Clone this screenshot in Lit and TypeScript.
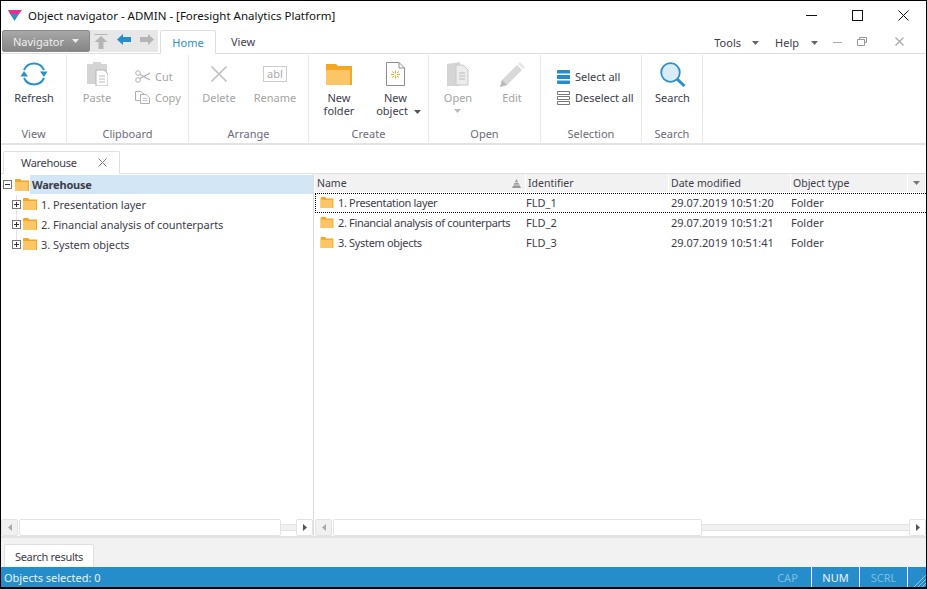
import { LitElement, html, css, svg } from "lit";
import { customElement } from "lit/decorators.js";

const folder = (w = 14, h = 12) => html`<svg class="ic" width=${w} height=${h} viewBox="0 0 14 12"><path d="M0 1Q0 0 1 0H5L6.5 1.5H14V12H0Z" fill="#f5a623"/><path d="M0 3H13V12H0Z" fill="#fcc567"/></svg>`;
const caret = () => html`<svg class="ic" width="7" height="4" viewBox="0 0 7 4"><path d="M0 0H7L3.5 4Z" fill="currentColor"/></svg>`;

const icons = {
  refresh: svg`<path d="M4 9A11 11 0 0 1 24 9" fill="none" stroke="#2a8fcb" stroke-width="2"/><path d="M20 10.5H27.5L24 16Z" fill="#2a8fcb"/><path d="M24 17A11 11 0 0 1 4 17" fill="none" stroke="#2a8fcb" stroke-width="2"/><path d="M.5 15.5H8L4 10Z" fill="#2a8fcb"/>`,
  paste: svg`<path d="M0 2H6V0H14V2H20V22H0Z" fill="#d4d4d4"/><path d="M9 8H17L21 12V24H9Z" fill="#fff" stroke="#b5b5b5"/><path d="M12 14H18M12 17H18M12 20H18" stroke="#bbb"/>`,
  edit: svg`<path d="M2 18L17 3L22 8L7 23L0 25Z" fill="#d8d8d8"/><path d="M18 2L20 0L25 5L23 7Z" fill="#e6e6e6"/><path d="M2 18L7 23L0 25Z" fill="#bbb"/>`,
  open: svg`<path d="M0 2L13 0V24H0Z" fill="#d5d5d5"/><path d="M9 3H16L21 8V23H9Z" fill="#ececec" stroke="#c8c8c8"/><path d="M12 11H18M12 14H18M12 17H18" stroke="#bbb"/>`,
  doc: svg`<path d="M.5.5H13L18.5 6V23.5H.5Z" fill="#fff" stroke="#8e8e8e"/><path d="M13 .5V6H18.5" fill="none" stroke="#8e8e8e"/><path d="M9.5 8.5V11.5M9.5 13.5V16.5M5 12.5H8M11 12.5H14M6 9.5L8 11M13 9.5L11 11M6 15.5L8 14M13 15.5L11 14" stroke="#f5a623"/>`,
  search: svg`<circle cx="10.5" cy="10.5" r="9.3" fill="#d8ebf7" stroke="#2a8fcb" stroke-width="1.8"/><path d="M17 17L24.5 24" stroke="#2a8fcb" stroke-width="3"/>`,
};

@customElement("app-root")
export class AppRoot extends LitElement {
  static styles = css`
    :host { display: block; width: 927px; height: 589px; font-family: "Noto Sans", sans-serif; font-size: 11px; color: #3d3d4a; }
    * { box-sizing: border-box; }
    .win { width: 927px; height: 589px; border: 1px solid #000; border-bottom-width: 2px; display: flex; flex-direction: column; background: #fff; overflow: hidden; }
    .ic { display: block; flex: none; }
    .title { height: 29px; display: flex; align-items: center; padding-left: 7px; flex: none; }
    .title .name { font-size: 11.5px; color: #111; margin-left: 6px; }
    .wbtns { margin-left: auto; display: flex; align-items: center; }
    .wbtn { width: 46px; display: flex; justify-content: center; }
    .menu { height: 24px; display: flex; flex: none; border-bottom: 1px solid #dfdfdf; padding-left: 1px; }
    .nav { width: 88px; height: 22px; background: linear-gradient(#a8a8a8, #858585); border: 1px solid #8a8a8a; border-radius: 2px; color: #eee; display: flex; align-items: center; padding-left: 10px; gap: 8px; }
    .qa { width: 68px; height: 22px; background: #e7e7e7; display: flex; align-items: center; gap: 9px; padding-left: 4px; }
    .tab-home { width: 56px; height: 24px; margin: 0 0 -1px 2px; border: 1px solid #dfdfdf; border-bottom: none; border-radius: 2px 2px 0 0; color: #2a8fcb; background: #fff; display: flex; align-items: center; justify-content: center; padding-bottom: 1px; }
    .tab-view { margin-left: 15px; display: flex; align-items: center; padding-bottom: 1px; }
    .right { margin-left: auto; display: flex; align-items: center; color: #3d3d4a; padding-top: 1px; }
    .right .arr { color: #666; margin-top: 2px; }
    .ribbon { height: 91px; flex: none; display: flex; border-bottom: 2px solid #e3e3e3; padding-top: 1px; }
    .grp { display: flex; flex-direction: column; margin-bottom: 1px; border-right: 1px solid #e8e8e8; flex: none; }
    .grp-body { flex: 1; display: flex; }
    .grp-label { height: 16px; text-align: center; color: #6b6b78; line-height: 15px; }
    .big { display: flex; flex-direction: column; align-items: center; flex: none; padding-top: 3px; text-align: center; line-height: 13px; }
    .big .slot { height: 32px; display: flex; align-items: center; justify-content: center; }
    .big .lbl { margin-top: 1px; }
    .dis { color: #a3a3a3; }
    .smalls { display: flex; flex-direction: column; padding-top: 11px; flex: none; }
    .small { height: 21px; display: flex; align-items: center; gap: 5px; }
    .objrow { display: flex; align-items: center; gap: 6px; }
    .objrow .arr { color: #555; margin-top: 2px; }
    .tabs { height: 29px; flex: none; display: flex; padding: 6px 0 0 2px; border-bottom: 1px solid #dfdfdf; }
    .tab { width: 117px; height: 23px; border: 1px solid #dfdfdf; border-bottom: none; border-radius: 2px 2px 0 0; background: #fff; display: flex; align-items: center; padding: 0 0 1px 17px; margin-bottom: -1px; letter-spacing: -.3px; }
    .tab .x { margin-left: auto; margin-right: 12px; }
    .main { flex: 1; display: flex; min-height: 0; }
    .left { width: 313px; flex: none; border-right: 1px solid #dcdcdc; display: flex; flex-direction: column; }
    .rightp { flex: 1; display: flex; flex-direction: column; min-width: 0; }
    .tree { flex: 1; padding-top: 1px; }
    .subs { background: linear-gradient(#e2e2e2, #e2e2e2) 15px 0 / 1px 50px no-repeat; }
    .trow { height: 20px; display: flex; align-items: center; padding-bottom: 2px; }
    .trow.root { height: 19px; margin-bottom: 1px; padding-bottom: 0; }
    .trow .rootbox { margin: 0 3px 0 2px; }
    .trow .sub { margin-left: 11px; margin-right: 2px; }
    .sel { flex: 1; height: 19px; margin-left: 1px; background: #d3e6f5; font-weight: 700; padding-left: 2px; display: flex; align-items: center; letter-spacing: -.2px; }
    .trow .t { margin-left: 4px; letter-spacing: -.06px; }
    .head { height: 19px; display: flex; flex: none; margin-left: 1px; font-size: 10.5px; }
    .hc { background: #f2f2f2; border-right: 1px solid #fff; display: flex; align-items: center; padding: 0 0 0 2px; flex: none; height: 18px; }
    .row { height: 20px; display: flex; align-items: center; margin-left: 1px; border: 1px solid transparent; padding-bottom: 2px; }
    .row.focus { border: 1px dotted #000; border-right: none; }
    .cell { flex: none; display: flex; align-items: center; white-space: nowrap; }
    .nm { letter-spacing: -.33px; }
    .grow { flex: 1; }
    .sb { height: 17px; flex: none; display: flex; background: #fff; align-items: center; }
    .sb .btn { width: 17px; height: 17px; background: #f1f1f1; border: 1px solid #e3e3e3; border-radius: 2px; display: flex; align-items: center; justify-content: center; flex: none; }
    .sb .btn.r { background: #fff; }
    .sb .thumb { height: 17px; background: #fff; border: 1px solid #e3e3e3; border-radius: 2px; flex: none; }
    .sb .track { height: 7px; flex: 1; background: #f1f1f1; border-top: 1px solid #e3e3e3; border-bottom: 1px solid #e3e3e3; }
    .bottom { height: 31px; flex: none; background: #f2f2f2; border-top: 2px solid #e3e3e3; padding: 6px 0 0 3px; }
    .btab { width: 90px; height: 24px; background: #fff; border: 1px solid #e0e0e0; border-bottom: none; border-radius: 2px 2px 0 0; display: flex; align-items: center; justify-content: center; letter-spacing: -.3px; }
    .status { height: 20px; flex: none; background: #268dcb; color: #eaf4fb; display: flex; align-items: center; padding-left: 3px; }
    .locks { margin-left: auto; display: flex; height: 100%; align-items: stretch; }
    .lock { width: 48px; display: flex; align-items: center; justify-content: center; border-right: 1px solid #eaf4fb; color: #7dbde4; }
    .lock.on { color: #eaf4fb; }
    .grip { width: 18px; display: flex; align-items: flex-end; justify-content: flex-end; }
  `;

  private bigBtn(w: number, icon: unknown, lines: unknown, cls = "") {
    return html`<div class="big ${cls}" style="width:${w}px"><div class="slot">${icon}</div><div class="lbl">${lines}</div></div>`;
  }

  private tri(dir: "l" | "r", color: string) {
    return html`<svg class="ic" width="4" height="7" viewBox="0 0 4 7"><path d=${dir === "l" ? "M4 0V7L0 3.5Z" : "M0 0V7L4 3.5Z"} fill=${color}/></svg>`;
  }

  private sb(leftThumb: number, pad: number) {
    return html`<div class="sb" style="padding-left:${pad}px"><div class="btn">${this.tri("l", "#aaa")}</div><div class="thumb" style="width:${leftThumb}px;margin-left:1px"></div><div class="track"></div><div class="btn r">${this.tri("r", "#555")}</div></div>`;
  }

  render() {
    const rows = [
      ["1. Presentation layer", "FLD_1", "29.07.2019 10:51:20"],
      ["2. Financial analysis of counterparts", "FLD_2", "29.07.2019 10:51:21"],
      ["3. System objects", "FLD_3", "29.07.2019 10:51:41"],
    ];
    const i = (w: number, h: number, body: unknown, vb = `0 0 ${w} ${h}`) => html`<svg class="ic" width=${w} height=${h} viewBox=${vb}>${body}</svg>`;
    const boxIcon = (plus: boolean) => html`<svg class="ic" width="9" height="9" viewBox="0 0 9 9"><rect x=".5" y=".5" width="8" height="8" fill="#fff" stroke="#777"/><path d=${plus ? "M2 4.5H7M4.5 2V7" : "M2 4.5H7"} stroke="#333"/></svg>`;
    const X = (s: number, c: string, w = 1) => html`<svg class="ic" width=${s} height=${s} viewBox="0 0 ${s} ${s}"><path d="M.5 .5L${s - .5} ${s - .5}M${s - .5} .5L.5 ${s - .5}" stroke=${c} stroke-width=${w} fill="none"/></svg>`;
    return html`
      <div class="win">
        <div class="title">
          <svg class="ic" width="14" height="11" viewBox="0 0 14 11" style="margin-top:-1px"><path d="M0 0H14L11 4H2Z" fill="#e8308a"/><path d="M2 4H11L6.5 11Z" fill="#2a8fcb"/></svg>
          <span class="name">Object navigator - ADMIN - [Foresight Analytics Platform]</span>
          <div class="wbtns">
            <div class="wbtn"><svg class="ic" width="11" height="1"><rect width="11" height="1" fill="#111"/></svg></div>
            <div class="wbtn"><svg class="ic" width="11" height="11"><rect x=".5" y=".5" width="10" height="10" fill="none" stroke="#111"/></svg></div>
            <div class="wbtn">${X(11, "#111")}</div>
          </div>
        </div>
        <div class="menu">
          <div class="nav">Navigator ${caret()}</div>
          <div class="qa">
            <svg class="ic" width="14" height="15" viewBox="0 0 13 15"><path d="M0 .5H13" stroke="#b5b5b5"/><path d="M6.5 2L13 8H9V15H4V8H0Z" fill="#b5b5b5"/></svg>
            <svg class="ic" width="14" height="11" viewBox="0 0 14 11" style="margin-top:-3px"><path d="M6 0V3H14V8H6V11L0 5.5Z" fill="#268dcb"/></svg>
            <svg class="ic" width="14" height="11" viewBox="0 0 14 11" style="margin-top:-3px"><path d="M8 0V3H0V8H8V11L14 5.5Z" fill="#b5b5b5"/></svg>
          </div>
          <div class="tab-home">Home</div>
          <div class="tab-view">View</div>
          <div class="right">
            <span>Tools</span><span class="arr" style="margin-left:11px">${caret()}</span>
            <span style="margin-left:16px">Help</span><span class="arr" style="margin-left:12px">${caret()}</span>
            <svg class="ic" width="9" height="1" style="margin-left:15px"><rect width="9" height="1" fill="#aaa"/></svg>
            <svg class="ic" width="10" height="9" viewBox="0 0 10 9" style="margin:-2px 0 0 15px"><path d="M2.5 2.5V.5H9.5V5.5H7.5M.5 2.5H7.5V8.5H.5Z" fill="none" stroke="#999"/></svg>
            <span style="margin:-2px 22px 0 28px">${X(9, "#aaa", 1.3)}</span>
          </div>
        </div>

        <div class="ribbon">
          <div class="grp" style="width:66px">
            <div class="grp-body">${this.bigBtn(66, i(28, 26, icons.refresh), "Refresh")}</div>
            <div class="grp-label">View</div>
          </div>
          <div class="grp" style="width:122px">
            <div class="grp-body">
              ${this.bigBtn(60, i(21, 24, icons.paste), "Paste", "dis")}
              <div class="smalls dis" style="margin-left:8px">
                <div class="small"><svg class="ic" width="15" height="13" viewBox="0 0 15 13"><circle cx="3" cy="3" r="2.3" fill="none" stroke="#b0b0b0"/><circle cx="3" cy="10" r="2.3" fill="none" stroke="#b0b0b0"/><path d="M5 4.5L15 10M5 8.5L15 3" stroke="#b0b0b0" stroke-width="1.2"/></svg>Cut</div>
                <div class="small"><svg class="ic" width="15" height="13" viewBox="0 0 15 13"><path d="M.5.5H6L9 3V9.5H.5Z" fill="#fff" stroke="#b0b0b0"/><path d="M5.5 3.5H11L14.5 6.5V12.5H5.5Z" fill="#fff" stroke="#b0b0b0"/><path d="M7.5 7.5H12.5M7.5 9.5H12.5" stroke="#c4c4c4"/></svg>Copy</div>
              </div>
            </div>
            <div class="grp-label">Clipboard</div>
          </div>
          <div class="grp" style="width:120px">
            <div class="grp-body">
              ${this.bigBtn(60, X(16, "#c4c4c4", 1.6), "Delete", "dis")}
              ${this.bigBtn(52, html`<svg class="ic" width="24" height="16" viewBox="0 0 24 16"><rect x=".5" y=".5" width="23" height="15" fill="#fff" stroke="#ccc"/><text x="12" y="12" text-anchor="middle" font-size="11" fill="#aaa" font-family="Noto Sans">abl</text></svg>`, "Rename", "dis")}
            </div>
            <div class="grp-label">Arrange</div>
          </div>
          <div class="grp" style="width:120px">
            <div class="grp-body">
              ${this.bigBtn(60, html`<svg class="ic" width="26" height="21" viewBox="0 0 26 21"><path d="M0 0H10L12 2H26V21H0Z" fill="#f5a623"/><path d="M0 6H24V21H0Z" fill="#fcc567"/></svg>`, html`New<br />folder`)}
              <div class="big" style="width:59px">
                <div class="slot" style="padding-right:6px">${i(19, 24, icons.doc)}</div>
                <div class="lbl"><div style="padding-right:6px">New</div><div class="objrow"><span>object</span><span class="arr">${caret()}</span></div></div>
              </div>
            </div>
            <div class="grp-label">Create</div>
          </div>
          <div class="grp" style="width:112px">
            <div class="grp-body">
              <div class="big dis" style="width:58px"><div class="slot">${i(22, 24, icons.open)}</div><div class="lbl">Open<div style="display:flex;justify-content:center;padding-top:5px;color:#bbb">${caret()}</div></div></div>
              ${this.bigBtn(50, i(25, 25, icons.edit), "Edit", "dis")}
            </div>
            <div class="grp-label">Open</div>
          </div>
          <div class="grp" style="width:101px">
            <div class="grp-body">
              <div class="smalls" style="margin-left:16px">
                <div class="small"><svg class="ic" width="13" height="14" viewBox="0 0 13 14"><path d="M1 0H12Q13 0 13 1V3.5H0V1Q0 0 1 0ZM0 5H13V9H0ZM0 10.5H13V13Q13 14 12 14H1Q0 14 0 13Z" fill="#268dcb"/></svg>Select all</div>
                <div class="small"><svg class="ic" width="13" height="14" viewBox="0 0 13 14"><path d="M.5.5H12.5V3.5H.5ZM.5 5.5H12.5V8.5H.5ZM.5 10.5H12.5V13.5H.5Z" fill="#fff" stroke="#777"/></svg>Deselect all</div>
              </div>
            </div>
            <div class="grp-label">Selection</div>
          </div>
          <div class="grp" style="width:61px">
            <div class="grp-body">${this.bigBtn(61, i(26, 25, icons.search), "Search")}</div>
            <div class="grp-label">Search</div>
          </div>
        </div>

        <div class="tabs"><div class="tab">Warehouse<span class="x">${X(9, "#777")}</span></div></div>

        <div class="main">
          <div class="left">
            <div class="tree">
              <div class="trow root">
                <span class="rootbox">${boxIcon(false)}</span>
                ${folder()}
                <div class="sel">Warehouse</div>
              </div>
              <div class="subs">
                ${rows.map((r) => html`<div class="trow"><span class="sub">${boxIcon(true)}</span>${folder()}<span class="t">${r[0]}</span></div>`)}
              </div>
            </div>
            ${this.sb(262, 0)}
          </div>
          <div class="rightp">
            <div class="head">
              <div class="hc" style="width:211px;padding-right:4px">Name<svg class="ic" width="9" height="9" viewBox="0 0 9 9" style="margin-left:auto"><path d="M4.5 0L9 9H0Z" fill="#999"/><path d="M0 3.5H9M0 6H9" stroke="#f2f2f2" stroke-width=".7"/></svg></div>
              <div class="hc" style="width:143px">Identifier</div>
              <div class="hc" style="width:122px">Date modified</div>
              <div class="hc" style="width:117px">Object type</div>
              <div class="hc grow" style="justify-content:center;padding:0;color:#777">${caret()}</div>
            </div>
            ${rows.map((r, n) => html`<div class="row ${n === 0 ? "focus" : ""}">
              <div class="cell" style="width:210px;padding-left:4px;gap:4px">${folder(14, 11)}<span class="nm">${r[0]}</span></div>
              <div class="cell" style="width:145px">${r[1]}</div>
              <div class="cell" style="width:120px">${r[2]}</div>
              <div class="cell grow">Folder</div>
            </div>`)}
            <div class="grow"></div>
            ${this.sb(369, 1)}
          </div>
        </div>

        <div class="bottom"><div class="btab">Search results</div></div>
        <div class="status">
          Objects selected: 0
          <div class="locks">
            <div class="lock">CAP</div>
            <div class="lock on">NUM</div>
            <div class="lock">SCRL</div>
            <div class="grip"><svg class="ic" width="12" height="12" viewBox="0 0 12 12"><path d="M0 12L12 0M4 12L12 4M8 12L12 8" stroke="#8cc4e6"/></svg></div>
          </div>
        </div>
      </div>
    `;
  }
}
